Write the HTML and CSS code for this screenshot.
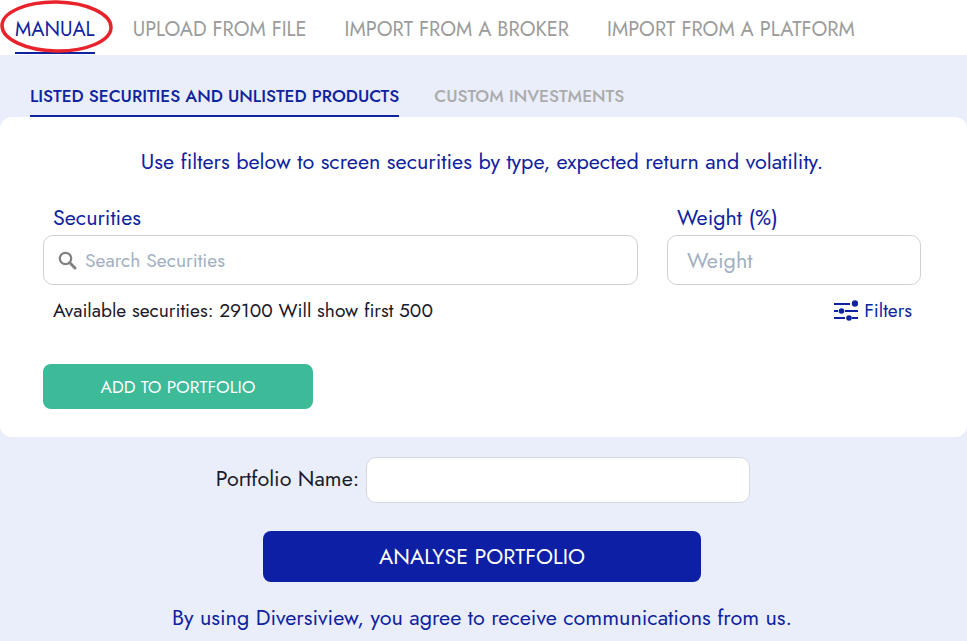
FILE: index.html
```html
<!DOCTYPE html>
<html lang="en">
<head>
<meta charset="utf-8">
<title>Portfolio</title>
<link rel="stylesheet" href="styles.css">
</head>
<body>
<nav class="top-tabs">
  <a class="top-tab active">MANUAL
    <svg class="ring" width="114" height="54" viewBox="0 0 114 54"><ellipse cx="56.500" cy="26.500" rx="54.500" ry="24.500" transform="rotate(1 56.500 26.500)" fill="none" stroke="#e8232c" stroke-width="3.500"/></svg>
  </a>
  <a class="top-tab">UPLOAD FROM FILE</a>
  <a class="top-tab">IMPORT FROM A BROKER</a>
  <a class="top-tab">IMPORT FROM A PLATFORM</a>
</nav>
<main class="page">
  <div class="sub-tabs">
    <a class="sub-tab active">LISTED SECURITIES AND UNLISTED PRODUCTS</a>
    <a class="sub-tab">CUSTOM INVESTMENTS</a>
  </div>
  <section class="card">
    <p class="hint">Use filters below to screen securities by type, expected return and volatility.</p>
    <div class="fields">
      <div class="field grow">
        <label class="label">Securities</label>
        <div class="input">
          <svg class="search" width="19" height="19" viewBox="0 0 19 19"><circle cx="7.500" cy="7.500" r="5.700" fill="none" stroke="#808080" stroke-width="2.200"/><path d="M11.800 11.800 L17 17" stroke="#808080" stroke-width="3" stroke-linecap="round"/></svg>
          <span class="placeholder">Search Securities</span>
        </div>
      </div>
      <div class="field weight">
        <label class="label">Weight (%)</label>
        <div class="input"><span class="placeholder big">Weight</span></div>
      </div>
    </div>
    <div class="meta">
      <span>Available securities: 29100 Will show first 500</span>
      <a class="filters">
        <svg width="24" height="21" viewBox="0 0 24 21"><path d="M0 4H16M0 11H4M11 11H24M0 18H11M18 18H24" fill="none" stroke="#0f23a0" stroke-width="2"/><circle cx="21" cy="3.500" r="3.200" fill="#0f23a0"/><circle cx="7.500" cy="11" r="2.800" fill="#0f23a0"/><circle cx="15" cy="18" r="2.800" fill="#0f23a0"/></svg>
        Filters
      </a>
    </div>
    <button class="add">ADD TO PORTFOLIO</button>
  </section>
  <div class="name-row">
    <label class="name-label">Portfolio Name:</label>
    <div class="name-input"></div>
  </div>
  <button class="analyse">ANALYSE PORTFOLIO</button>
  <p class="consent">By using Diversiview, you agree to receive communications from us.</p>
</main>
</body>
</html>
```
FILE: styles.css
```css
* { box-sizing: border-box; }
html, body { margin: 0; height: 641px; overflow: hidden; }
body { font-family: "Jost", "Lato", "Noto Sans", sans-serif; background: #fff; color: #0f23a0; }
.top-tabs { display: flex; gap: 38px; height: 55px; padding-left: 15px; background: #fff; }
.top-tab { position: relative; font-size: 20px; font-weight: 450; line-height: 60px; color: #9b9b9b; white-space: nowrap; }
.top-tab.active { color: #0f23a0; border-bottom: 2px solid #0f23a0; height: 54px; }
.ring { position: absolute; left: -15px; top: 0; }
.page { background: #eaeefa; height: 586px; display: flex; flex-direction: column; padding-right: 3px; align-items: center; }
.sub-tabs { align-self: stretch; margin-right: -3px; display: flex; gap: 35px; padding-left: 30px; height: 62px; padding-top: 20px; }
.sub-tab { font-size: 17.250px; font-weight: 500; line-height: 42px; height: 42px; color: #ababab; }
.sub-tab.active { color: #0f23a0; border-bottom: 2px solid #0f23a0; }
.card { align-self: stretch; margin-right: -3px; background: #fff; border-radius: 12px; height: 320px; padding: 30px 46px 28px 43px; display: flex; flex-direction: column; }
.hint { margin: 0 0 28px; text-align: center; font-size: 21.600px; line-height: 29px; }
.fields { display: flex; gap: 29px; }
.field { display: flex; flex-direction: column; gap: 3px; }
.grow { flex: 1; }
.weight { width: 254px; }
.label { font-size: 21.500px; line-height: 27px; padding-left: 10px; margin-bottom: 1px; }
.input { height: 50px; border: 1px solid #cfd1d6; border-radius: 10px; display: flex; align-items: center; padding-left: 14px; gap: 8px; background: #fff; }
.placeholder { color: #a3b0c2; font-size: 19.300px; }
.placeholder.big { font-size: 21.700px; padding-left: 5px; }
.meta { display: flex; justify-content: space-between; align-items: center; color: #1a1a2a; font-size: 19.200px; height: 22px; margin-top: 14px; margin-bottom: 2px; padding: 0 9px 0 10px; }
.filters { display: flex; align-items: center; gap: 6px; color: #0f23a0; }
.add { flex-shrink: 0; margin-top: 41px; width: 270px; height: 45px; border: 0; border-radius: 8px; background: #3dba98; color: #fff; font: inherit; font-size: 17.300px; }
.name-row { display: flex; align-items: center; gap: 7px; margin-top: 20px; padding-left: 2px; }
.name-label { color: #1a1a2a; font-size: 21.500px; line-height: 44px; height: 46px; }
.name-input { width: 384px; height: 46px; border: 1px solid #d5d8df; border-radius: 10px; background: #fff; }
.analyse { flex-shrink: 0; margin-top: 28px; width: 438px; height: 51px; border: 0; border-radius: 8px; background: #0d20a5; color: #fff; font: inherit; font-size: 21.500px; }
.consent { margin: 22px 0 0; font-size: 21.600px; line-height: 28px; }
```
